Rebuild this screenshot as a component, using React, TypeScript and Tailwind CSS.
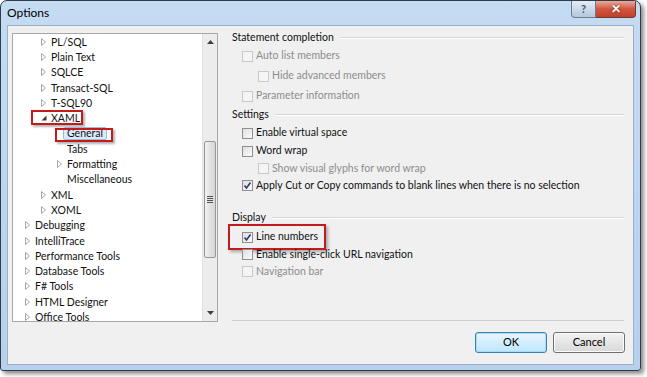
import React from 'react';

type Node = { label: string; level: number; arrow: 'closed' | 'open' | 'none'; selected?: boolean };

const tree: Node[] = [
  { label: 'PL/SQL', level: 2, arrow: 'closed' },
  { label: 'Plain Text', level: 2, arrow: 'closed' },
  { label: 'SQLCE', level: 2, arrow: 'closed' },
  { label: 'Transact-SQL', level: 2, arrow: 'closed' },
  { label: 'T-SQL90', level: 2, arrow: 'closed' },
  { label: 'XAML', level: 2, arrow: 'open' },
  { label: 'General', level: 3, arrow: 'none', selected: true },
  { label: 'Tabs', level: 3, arrow: 'none' },
  { label: 'Formatting', level: 3, arrow: 'closed' },
  { label: 'Miscellaneous', level: 3, arrow: 'none' },
  { label: 'XML', level: 2, arrow: 'closed' },
  { label: 'XOML', level: 2, arrow: 'closed' },
  { label: 'Debugging', level: 1, arrow: 'closed' },
  { label: 'IntelliTrace', level: 1, arrow: 'closed' },
  { label: 'Performance Tools', level: 1, arrow: 'closed' },
  { label: 'Database Tools', level: 1, arrow: 'closed' },
  { label: 'F# Tools', level: 1, arrow: 'closed' },
  { label: 'HTML Designer', level: 1, arrow: 'closed' },
  { label: 'Office Tools', level: 1, arrow: 'closed' },
];

const indent: Record<number, string> = { 1: 'pl-[12px]', 2: 'pl-[28px]', 3: 'pl-[44px]' };

function Arrow({ kind }: { kind: Node['arrow'] }) {
  if (kind === 'open')
    return (
      <svg width="6" height="6" viewBox="0 0 6 6" className="mr-[4px]">
        <path d="M5.5 0.5 L5.5 5.5 L0.5 5.5 Z" fill="#3c3c3c" />
      </svg>
    );
  if (kind === 'closed')
    return (
      <svg width="6" height="8" viewBox="0 0 6 8" className="mr-[4px]">
        <path d="M0.5 0.5 L4.5 4 L0.5 7.5 Z" fill="none" stroke="#a6a6a6" />
      </svg>
    );
  return <span className="w-[6px] mr-[4px]" />;
}

function TreeRow({ node }: { node: Node }) {
  return (
    <div className={`relative flex items-center h-[15.3px] shrink-0 ${indent[node.level]}`}>
      <Arrow kind={node.arrow} />
      <span
        className={
          node.selected
            ? 'relative -ml-[4px] px-[3px] leading-[11px] border border-[#9cbde0] bg-[#dcebfc] rounded-[2px]'
            : 'leading-[12px]'
        }
      >
        {node.label}
      </span>
      {node.label === 'XAML' && (
        <div className="absolute left-[18px] top-[0px] w-[52px] h-[15px] border-2 border-[#c41a1a] shadow-[2px_2px_2px_rgba(0,0,0,0.3)]" />
      )}
      {node.selected && (
        <div className="absolute left-[42px] top-[2px] w-[58px] h-[14px] border-2 border-[#c41a1a] shadow-[2px_2px_2px_rgba(0,0,0,0.3)]" />
      )}
    </div>
  );
}

function Check({ checked, disabled }: { checked?: boolean; disabled?: boolean }) {
  return (
    <span
      className={`flex items-center justify-center w-[11px] h-[11px] mr-[3px] shrink-0 border ${
        disabled ? 'border-[#c9c9c9] bg-[#f5f5f5]' : 'border-[#8e8f8f] bg-gradient-to-br from-[#dedede] to-[#fbfbfb]'
      }`}
    >
      {checked && (
        <svg width="9" height="9" viewBox="0 0 9 9">
          <path d="M1.5 4.5 L3.5 7 L7.5 1.5" fill="none" stroke="#2b3b72" strokeWidth="1.6" />
        </svg>
      )}
    </span>
  );
}

function Option({
  label,
  checked,
  disabled,
  sub,
  h,
  children,
}: {
  label: string;
  checked?: boolean;
  disabled?: boolean;
  sub?: boolean;
  h: string;
  children?: React.ReactNode;
}) {
  return (
    <div className={`relative flex items-center ${h} ${sub ? 'pl-[26px]' : 'pl-[10px]'}`}>
      <Check checked={checked} disabled={disabled} />
      <span className={disabled ? 'text-[#8d8d8d]' : 'text-[#111]'}>{label}</span>
      {children}
    </div>
  );
}

function Group({ title, h }: { title: string; h: string }) {
  return (
    <div className={`flex items-center ${h}`}>
      <span>{title}</span>
      <div className="flex-1 ml-[6px] h-[2px] border-t border-[#d5d5d5] border-b border-b-white" />
    </div>
  );
}

export default function App() {
  return (
    <div className="w-[647px] h-[377px] bg-white text-[10.5px] text-[#111]" style={{ fontFamily: 'Lato, "Open Sans", sans-serif' }}>
      <div className="w-[641px] h-[371px] flex flex-col rounded-t-[7px] rounded-b-[3px] border border-[#2f3b48] bg-gradient-to-b from-[#c4dbf2] to-[#b7d1ec] shadow-[3px_3px_4px_rgba(0,0,0,0.45)] overflow-hidden">
        <div className="flex h-[24px] shrink-0 relative">
          <span className="pl-[6px] pt-[3px] text-[12px] text-black">Options</span>
          <div className="flex-1 flex items-start justify-end pr-[4px]">
            <div className="w-[25px] h-[17px] flex items-center justify-center rounded-bl-[4px] border border-t-0 border-[#6b7d93] bg-gradient-to-b from-[#e4edf7] to-[#b4c7dc] text-[#44556a] text-[11px] font-bold">
              ?
            </div>
            <div className="w-[40px] h-[17px] flex items-center justify-center rounded-br-[4px] border border-t-0 border-l-0 border-[#6b3a32] bg-gradient-to-b from-[#e9a99b] via-[#d0553f] to-[#c2402c] text-white text-[12px] font-bold [text-shadow:0_0_2px_#5a1a10]">
              ✕
            </div>
          </div>
        </div>
        <div className="flex-1 mx-[6px] mb-[5px] bg-[#f0f0f0] border border-[#9bb1c9] flex flex-col">
          <div className="flex pt-[4px]">
            <div className="ml-[4px] mt-[3px] w-[206px] h-[289px] border border-[#a7a7a7] bg-white flex overflow-hidden">
              <div className="flex-1 flex flex-col overflow-hidden">
                {tree.map((n) => (
                  <TreeRow key={n.label} node={n} />
                ))}
              </div>
              <div className="w-[15px] bg-[#ececec] border-l border-[#e2e2e2] flex flex-col items-center">
                <div className="h-[16px] flex items-center justify-center">
                  <svg width="7" height="4" viewBox="0 0 7 4">
                    <path d="M0 4 L3.5 0 L7 4 Z" fill="#404040" />
                  </svg>
                </div>
                <div className="mt-[91px] w-[12px] h-[117px] rounded-[2px] border border-[#979797] bg-gradient-to-r from-[#f1f1f1] to-[#d6d6d6] flex items-center justify-center">
                  <div className="flex flex-col gap-[1px]">
                    <div className="w-[6px] h-[1px] bg-[#555]" />
                    <div className="w-[6px] h-[1px] bg-[#555]" />
                    <div className="w-[6px] h-[1px] bg-[#555]" />
                    <div className="w-[6px] h-[1px] bg-[#555]" />
                  </div>
                </div>
                <div className="mt-auto h-[16px] flex items-center justify-center">
                  <svg width="7" height="4" viewBox="0 0 7 4">
                    <path d="M0 0 L3.5 4 L7 0 Z" fill="#404040" />
                  </svg>
                </div>
              </div>
            </div>
            <div className="ml-[14px] w-[392px] h-[291px] flex flex-col border-b border-[#cfcfcf]">
              <Group title="Statement completion" h="h-[16px]" />
              <Option label="Auto list members" disabled h="h-[20px]" />
              <Option label="Hide advanced members" disabled sub h="h-[20px]" />
              <Option label="Parameter information" disabled h="h-[20px]" />
              <Group title="Settings" h="h-[18px]" />
              <Option label="Enable virtual space" h="h-[18px]" />
              <Option label="Word wrap" h="h-[18px]" />
              <Option label="Show visual glyphs for word wrap" disabled sub h="h-[17px]" />
              <Option label="Apply Cut or Copy commands to blank lines when there is no selection" checked h="h-[17px]" />
              <div className="h-[14px]" />
              <Group title="Display" h="h-[20px]" />
              <Option label="Line numbers" checked h="h-[18px]">
                <div className="absolute left-[-4px] top-[-4px] w-[98px] h-[26px] border-2 border-[#c41a1a] shadow-[2px_2px_3px_rgba(0,0,0,0.3)]" />
              </Option>
              <Option label="Enable single-click URL navigation" h="h-[17px]" />
              <Option label="Navigation bar" disabled h="h-[17px]" />
            </div>
          </div>
          <div className="flex justify-end gap-[6px] pr-[8px] mt-[10px]">
            <button className="w-[72px] h-[21px] rounded-[3px] border border-[#3c7fb1] bg-gradient-to-b from-[#eaf6fd] to-[#bee6fd] shadow-[inset_0_0_0_1px_#a6dcf9] text-[11px] text-black">
              OK
            </button>
            <button className="w-[72px] h-[21px] rounded-[3px] border border-[#707070] bg-gradient-to-b from-[#f2f2f2] to-[#d9d9d9] shadow-[inset_0_0_0_1px_#fcfcfc] text-[11px] text-black">
              Cancel
            </button>
          </div>
        </div>
      </div>
    </div>
  );
}
